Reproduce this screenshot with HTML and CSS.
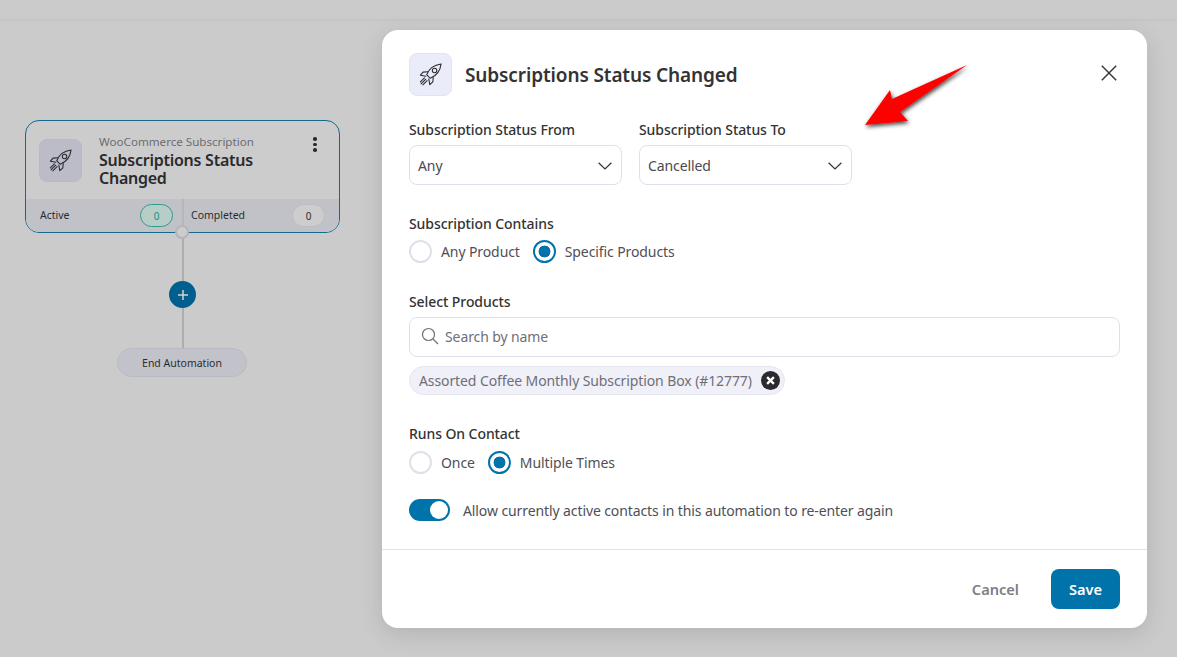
FILE: index.html
```html
<!DOCTYPE html>
<html lang="en">
<head>
<meta charset="utf-8">
<title>Subscriptions Status Changed</title>
<link rel="stylesheet" href="styles.css">
</head>
<body>
<svg width="0" height="0" class="defs">
  <symbol id="rocket" viewBox="0 0 24 24">
    <g fill="none" stroke="currentColor" stroke-width=".95" stroke-linejoin="round" stroke-linecap="round">
      <path d="M8.6 12.2C10.4 7.6 14.8 3.4 21.4 2.6 20.6 9.2 16.4 13.6 11.8 15.4Z"/>
      <circle cx="15.6" cy="8.4" r="2"/>
      <path d="M9.6 9.6 5.4 9.9 3 12.6 7.9 13.5"/>
      <path d="M14.4 14.4 14.1 18.6 11.4 21 10.5 16.1"/>
      <path d="M6.6 15 3 18.6M9 17.4 5.2 21.2M7.8 16.2 3.6 20.4"/>
    </g>
  </symbol>
</svg>

<header class="topbar"></header>

<section class="node">
  <div class="node-main">
    <div class="icon-box node-icon"><svg class="rocket-sm"><use href="#rocket"/></svg></div>
    <div class="node-text">
      <div class="node-kicker">WooCommerce Subscription</div>
      <div class="node-title">Subscriptions Status Changed</div>
    </div>
    <div class="kebab"><i></i><i></i><i></i></div>
  </div>
  <div class="node-stats">
    <div class="stat stat-left"><span>Active</span><b class="count count-active">0</b></div>
    <div class="stat stat-right"><span>Completed</span><b class="count">0</b></div>
  </div>
  <div class="port"></div>
</section>
<div class="wire">
  <div class="plus"><svg viewBox="0 0 12 12" width="12" height="12"><path d="M6 1v10M1 6h10" stroke="#d3d3d3" stroke-width="1.5"/></svg></div>
</div>
<div class="end-node">End Automation</div>

<main class="modal">
  <div class="modal-body">
    <div class="modal-head">
      <div class="icon-box head-icon"><svg class="rocket-lg"><use href="#rocket"/></svg></div>
      <h1>Subscriptions Status Changed</h1>
      <svg class="close" viewBox="0 0 16 16" width="16" height="16"><path d="M.8.8l14.4 14.4M15.2.8.8 15.2" stroke="#333" stroke-width="1.4" fill="none"/></svg>
    </div>

    <div class="selects">
      <div class="field">
        <label>Subscription Status From</label>
        <div class="select"><span>Any</span><svg class="chev" viewBox="0 0 14 8" width="14" height="8"><path d="M.6.8 7 7l6.4-6.2" stroke="#333" stroke-width="1.2" fill="none"/></svg></div>
      </div>
      <div class="field">
        <label>Subscription Status To</label>
        <div class="select"><span>Cancelled</span><svg class="chev" viewBox="0 0 14 8" width="14" height="8"><path d="M.6.8 7 7l6.4-6.2" stroke="#333" stroke-width="1.2" fill="none"/></svg></div>
      </div>
    </div>

    <div class="group group-contains">
      <label>Subscription Contains</label>
      <div class="radios radios-contains">
        <div class="radio"><i class="dot"></i>Any Product</div>
        <div class="radio on"><i class="dot"></i>Specific Products</div>
      </div>
    </div>

    <div class="group group-products">
      <label>Select Products</label>
      <div class="search">
        <svg viewBox="0 0 18 18" width="18" height="18"><circle cx="7.5" cy="7.5" r="6" stroke="#6f6f78" stroke-width="1.2" fill="none"/><path d="M12 12l5 5" stroke="#6f6f78" stroke-width="1.2"/></svg>
        <span>Search by name</span>
      </div>
      <div class="chip">
        <span>Assorted Coffee Monthly Subscription Box (#12777)</span>
        <svg viewBox="0 0 18 18" width="19" height="19"><circle cx="9" cy="9" r="9" fill="#2b2b2e"/><path d="M5.8 5.8l6.4 6.4M12.2 5.8l-6.4 6.4" stroke="#fff" stroke-width="2.2"/></svg>
      </div>
    </div>

    <div class="group group-runs">
      <label>Runs On Contact</label>
      <div class="radios radios-runs">
        <div class="radio"><i class="dot"></i>Once</div>
        <div class="radio on"><i class="dot"></i>Multiple Times</div>
      </div>
    </div>

    <div class="toggle-row">
      <div class="toggle"><i></i></div>
      <span>Allow currently active contacts in this automation to re-enter again</span>
    </div>
  </div>
  <footer class="modal-foot">
    <button class="btn-cancel">Cancel</button>
    <button class="btn-save">Save</button>
  </footer>
</main>

<svg class="arrow" viewBox="0 0 120 80" width="120" height="80">
  <defs><filter id="sh" x="-20%" y="-20%" width="150%" height="150%"><feDropShadow dx="1" dy="2" stdDeviation="2.2" flood-color="#000" flood-opacity=".75"/></filter></defs>
  <path d="M5 65 30 30 32 39 107 5 40 52 48 61Z" fill="#f00" filter="url(#sh)"/>
</svg>
</body>
</html>
```

FILE: styles.css
```css
* { box-sizing: border-box; }
html, body { margin: 0; height: 100%; }
body {
  position: relative;
  width: 1177px;
  height: 657px;
  overflow: hidden;
  background: #cbcbcb;
  font-family: "Noto Sans", "Open Sans", sans-serif;
  color: #333;
}
.defs { position: absolute; }
.topbar {
  height: 20px;
  background: #cbcbcb;
  border-bottom: 1px solid #c4c4c4;
  box-shadow: 0 1px 3px rgba(0,0,0,.03);
}

/* diagram */
.node {
  position: absolute;
  left: 25px;
  top: 120px;
  width: 315px;
  height: 113px;
  border: 1px solid #13688c;
  border-radius: 14px;
  background: #cccccc;
}
.node-main { display: flex; height: 78px; padding: 18px 0 0 13px; }
.node-icon { width: 43px; height: 43px; background: #bbbcc8; border: 1px solid #b8b9c6; color: #2a2a2e; }
.icon-box {
  display: flex;
  align-items: center;
  justify-content: center;
  flex: none;
  border-radius: 8px;
}
.rocket-sm, .rocket-lg { width: 27px; height: 27px; }
.node-text { width: 190px; margin: -4px 0 0 17px; }
.node-kicker { font-size: 11.6px; line-height: 14px; color: #6c6c72; white-space: nowrap; }
.node-title { font-size: 16px; line-height: 18px; font-weight: 600; color: #2a2a2c; margin-top: 2px; letter-spacing: -.25px; }
.kebab { display: flex; flex-direction: column; gap: 2px; margin: -2px 0 0 24px; }
.kebab i { width: 3.5px; height: 3.5px; background: #2a2a2c; border-radius: 50%; }
.node-stats {
  display: flex;
  height: 33px;
  background: #c1c2c7;
  border-radius: 0 0 13px 13px;
  font-size: 10.5px;
  color: #2c2c2e;
}
.stat { display: flex; flex: none; align-items: center; justify-content: space-between; height: 32px; }
.stat-left { width: 158px; padding: 0 9px 1px 14px; border-right: 2px solid #b5b6bb; }
.stat-right { width: 155px; padding: 0 14px 1px 7px; }
.count {
  display: flex;
  align-items: center;
  justify-content: center;
  width: 33px;
  height: 23px;
  margin-top: 2px;
  border-radius: 12px;
  border: 1px solid #bcbdc4;
  background: #cdcdcd;
  font-weight: 400;
  font-size: 10px;
}
.count-active { border-color: #2f9b8b; background: #b6cdc8; color: #1f8e80; }
.port {
  position: absolute;
  left: 149px;
  top: 104px;
  width: 14px;
  height: 14px;
  border-radius: 50%;
  background: #cccccc;
  border: 2px solid #b4b5bb;
}
.wire {
  position: absolute;
  left: 181.5px;
  top: 239px;
  width: 2px;
  height: 110px;
  background: #adadae;
}
.plus {
  position: absolute;
  left: -12.5px;
  top: 42px;
  width: 27px;
  height: 27px;
  border-radius: 50%;
  background: #005f8c;
  display: flex;
  align-items: center;
  justify-content: center;
}
.end-node {
  position: absolute;
  left: 117px;
  top: 348px;
  width: 130px;
  height: 29px;
  border-radius: 15px;
  background: #c2c3ca;
  border: 1px solid #b9bac3;
  font-size: 10.5px;
  color: #2c2c2e;
  display: flex;
  align-items: center;
  justify-content: center;
}

/* modal */
.modal {
  position: absolute;
  left: 382px;
  top: 30px;
  width: 765px;
  height: 598px;
  background: #fff;
  border-radius: 16px;
  box-shadow: 0 6px 24px rgba(0,0,0,.12);
  display: flex;
  flex-direction: column;
}
.modal-body { flex: none; height: 520px; padding: 23px 27px 0; border-bottom: 1px solid #e2e2ea; }
.modal-head { display: flex; align-items: center; height: 43px; }
.head-icon { width: 43px; height: 43px; background: #ebecfa; border: 1px solid #e3e4f2; color: #2a2a2e; }
h1 { margin: 0 0 0 13px; font-size: 19px; font-weight: 600; letter-spacing: -.12px; color: #333; }
.close { margin: -3px 3px 0 auto; }
label { display: block; font-size: 14px; line-height: 18px; font-weight: 500; letter-spacing: -.08px; color: #333; }
.selects { display: flex; gap: 17px; margin-top: 25px; }
.field { width: 213px; }
.select {
  display: flex;
  align-items: center;
  justify-content: space-between;
  height: 40px;
  margin-top: 6px;
  padding: 0 9px 0 8px;
  border: 1px solid #e0e0ea;
  border-radius: 8px;
  font-size: 14px;
  letter-spacing: -.1px;
  color: #4a4a4f;
}
.chev { margin-top: 2px; }
.group-contains { margin-top: 30px; }
.group-products { margin-top: 30px; }
.group-runs { margin-top: 30px; }
.radios { display: flex; gap: 13px; }
.radios-contains { margin-top: 7px; }
.radios-runs { margin-top: 8px; }
.radio { display: flex; align-items: center; gap: 9px; height: 23px; font-size: 14px; letter-spacing: -.1px; color: #4f4f55; }
.dot {
  flex: none;
  width: 23px;
  height: 23px;
  border-radius: 50%;
  border: 2px solid #e0e0ea;
  background: #fff;
}
.on .dot { border-color: #0073aa; background: radial-gradient(circle, #0073aa 0 5.7px, #fff 6.2px); }
.search {
  display: flex;
  align-items: center;
  gap: 6px;
  height: 40px;
  margin-top: 6px;
  padding: 0 11px 2px;
  border: 1px solid #e0e0ea;
  border-radius: 8px;
  font-size: 14px;
  letter-spacing: -.1px;
  color: #6f6f78;
}
.chip {
  display: inline-flex;
  align-items: center;
  gap: 9px;
  height: 29px;
  margin-top: 9px;
  padding: 0 4px 0 9px;
  background: #f0f0f8;
  border: 1px solid #e6e6f0;
  border-radius: 15px;
  font-size: 14px;
  letter-spacing: -.1px;
  color: #6f6f78;
  vertical-align: top;
}
.toggle-row { display: flex; align-items: center; gap: 13px; margin-top: 25px; font-size: 14px; letter-spacing: -.1px; color: #4f4f55; }
.toggle {
  flex: none;
  display: flex;
  justify-content: flex-end;
  align-items: center;
  width: 41px;
  height: 22px;
  padding-right: 2px;
  border-radius: 11px;
  background: #0073aa;
}
.toggle i { width: 18px; height: 18px; border-radius: 50%; background: #fff; }
.modal-foot { display: flex; align-items: center; justify-content: flex-end; gap: 32px; height: 78px; padding: 0 27px; }
button { font-family: inherit; font-size: 14.6px; font-weight: 600; border: 0; cursor: pointer; }
.btn-cancel { background: none; color: #7e7e88; padding: 0; }
.btn-save { width: 69px; height: 40px; background: #0073aa; color: #fff; border-radius: 8px; padding: 0; }
.arrow { position: absolute; left: 860px; top: 60px; }
```
